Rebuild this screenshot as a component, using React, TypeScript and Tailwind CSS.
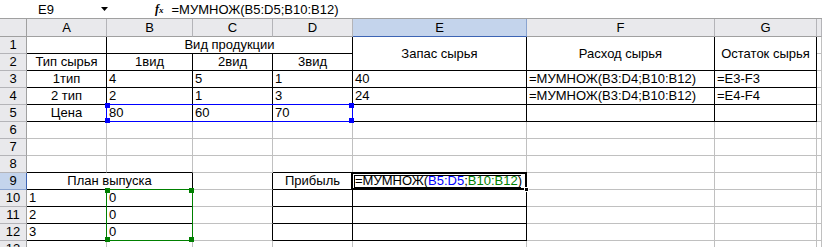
import React from "react";

type Cell = { t?: React.ReactNode; cs?: number; rs?: number; center?: boolean } | null;

const colHeads = ["A", "B", "C", "D", "E", "F", "G", ""];

// null = covered by a merged cell
const sheet: Cell[][] = [
  [{}, { t: "Вид продукции", cs: 3, center: true }, null, null, { t: "Запас сырья", rs: 2, center: true }, { t: "Расход сырья", rs: 2, center: true }, { t: "Остаток сырья", rs: 2, center: true }, {}],
  [{ t: "Тип сырья", center: true }, { t: "1вид", center: true }, { t: "2вид", center: true }, { t: "3вид", center: true }, null, null, null, {}],
  [{ t: "1тип", center: true }, { t: "4" }, { t: "5" }, { t: "1" }, { t: "40" }, { t: "=МУМНОЖ(B3:D4;B10:B12)" }, { t: "=E3-F3" }, {}],
  [{ t: "2 тип", center: true }, { t: "2" }, { t: "1" }, { t: "3" }, { t: "24" }, { t: "=МУМНОЖ(B3:D4;B10:B12)" }, { t: "=E4-F4" }, {}],
  [{ t: "Цена", center: true }, { t: "80" }, { t: "60" }, { t: "70" }, {}, {}, {}, {}],
  [{}, {}, {}, {}, {}, {}, {}, {}],
  [{}, {}, {}, {}, {}, {}, {}, {}],
  [{}, {}, {}, {}, {}, {}, {}, {}],
  [{ t: "План выпуска", cs: 2, center: true }, null, {}, { t: "Прибыль", center: true }, {
    t: (
      <>
        =МУМНОЖ(<span className="text-[#0000ff]">B5:D5</span>;<span className="text-[#008000]">B10:B12</span>)
      </>
    ),
  }, {}, {}, {}],
  [{ t: "1" }, { t: "0" }, {}, {}, {}, {}, {}, {}],
  [{ t: "2" }, { t: "0" }, {}, {}, {}, {}, {}, {}],
  [{ t: "3" }, { t: "0" }, {}, {}, {}, {}, {}, {}],
  [{}, {}, {}, {}, {}, {}, {}, {}],
];

// bordered ranges (rows 1-based, cols 0 = A)
function inReg(r: number, c: number) {
  if (r >= 1 && r <= 5 && c >= 0 && c <= 6) return true;
  if (r >= 9 && r <= 12 && c >= 0 && c <= 1) return true;
  if (r >= 9 && r <= 12 && c >= 3 && c <= 4) return true;
  return false;
}

function Handle({ className }: { className: string }) {
  return <div className={"absolute w-[5px] h-[5px] " + className} />;
}

export default function App() {
  const cells: React.ReactNode[] = [];

  // header row
  cells.push(<div key="corner" className="bg-[#e9e9ec] border-r border-b border-r-[#a0a0a0] border-b-[#a0a0a0]" />);
  colHeads.forEach((h, i) => {
    const sel = h === "E";
    cells.push(
      <div
        key={"h" + i}
        className={
          "flex items-center justify-center border-r border-b " +
          (sel ? "bg-[#c4d4ec] border-b-[#3c64b4] border-r-[#8aa4d0]" : "bg-[#e9e9ec] border-b-[#a0a0a0] border-r-[#b4b4b8]")
        }
      >
        {h}
      </div>
    );
  });

  sheet.forEach((row, ri) => {
    const r = ri + 1;
    const sel = r === 9;
    cells.push(
      <div
        key={"r" + r}
        className={
          "flex items-center justify-center border-r border-b " +
          (sel ? "bg-[#c4d4ec] border-r-[#3c64b4] border-b-[#8aa4d0]" : "bg-[#e9e9ec] border-r-[#a0a0a0] border-b-[#b4b4b8]")
        }
      >
        {r}
      </div>
    );
    row.forEach((cell, c) => {
      if (cell === null) return;
      const cs = cell.cs ?? 1;
      const rs = cell.rs ?? 1;
      const right = inReg(r, c) || inReg(r, c + cs);
      const bottom = inReg(r, c) || inReg(r + rs, c);
      cells.push(
        <div
          key={r + "-" + c}
          className={
            "flex overflow-hidden whitespace-nowrap border-r border-b px-[2px] " +
            (cs === 3 ? "col-span-3 " : cs === 2 ? "col-span-2 " : "") +
            (rs === 2 ? "row-span-2 items-center " : "items-start ") +
            (cell.center ? "justify-center " : "justify-start ") +
            (right ? "border-r-black " : "border-r-[#c0c0c0] ") +
            (bottom ? "border-b-black" : "border-b-[#c0c0c0]")
          }
        >
          {cell.t}
        </div>
      );
    });
  });

  return (
    <div className="relative w-[822px] h-[247px] overflow-hidden bg-white text-black text-[13px] leading-[16px] font-['Liberation_Sans',Arial,sans-serif]">
      {/* formula bar */}
      <div className="flex items-center h-[19px] border-b border-b-[#a0a0a0] bg-white">
        <div className="w-[92px] text-center pt-px">E9</div>
        <svg width="7" height="4" viewBox="0 0 7 4" className="ml-[9px]">
          <path d="M0 0h7L3.5 4z" fill="#000" />
        </svg>
        <span className="ml-[47px] text-[12px] italic font-['Liberation_Serif',serif] font-bold pt-px">
          f<span className="text-[9px]">x</span>
        </span>
        <span className="ml-[8px] pt-px">=МУМНОЖ(B5:D5;B10:B12)</span>
      </div>

      {/* sheet */}
      <div className="grid grid-cols-[27px_80px_86px_80px_80px_174px_188px_102px_1fr] grid-rows-[18px] auto-rows-[17px]">
        {cells}
      </div>

      {/* range highlight B5:D5 */}
      <div className="absolute left-[106px] top-[104px] w-[247px] h-[18px] border border-[#0000ff]" />
      <Handle className="bg-[#0000ff] left-[105px] top-[103px]" />
      <Handle className="bg-[#0000ff] left-[349px] top-[103px]" />
      <Handle className="bg-[#0000ff] left-[105px] top-[118px]" />
      <Handle className="bg-[#0000ff] left-[349px] top-[118px]" />

      {/* range highlight B10:B12 */}
      <div className="absolute left-[106px] top-[189px] w-[87px] h-[52px] border border-[#008000]" />
      <Handle className="bg-[#008000] left-[105px] top-[188px]" />
      <Handle className="bg-[#008000] left-[189px] top-[188px]" />
      <Handle className="bg-[#008000] left-[105px] top-[237px]" />
      <Handle className="bg-[#008000] left-[189px] top-[237px]" />

      {/* active cell E9 in edit mode */}
      <div className="absolute left-[351px] top-[172px] w-[176px] h-[18px] border-2 border-black" />
      <div className="absolute left-[354px] top-[175px] w-[167px] h-[13px] border border-black border-r-0" />
      <div className="absolute left-[524px] top-[187px] w-[5px] h-[5px] bg-black border border-white" />
    </div>
  );
}
